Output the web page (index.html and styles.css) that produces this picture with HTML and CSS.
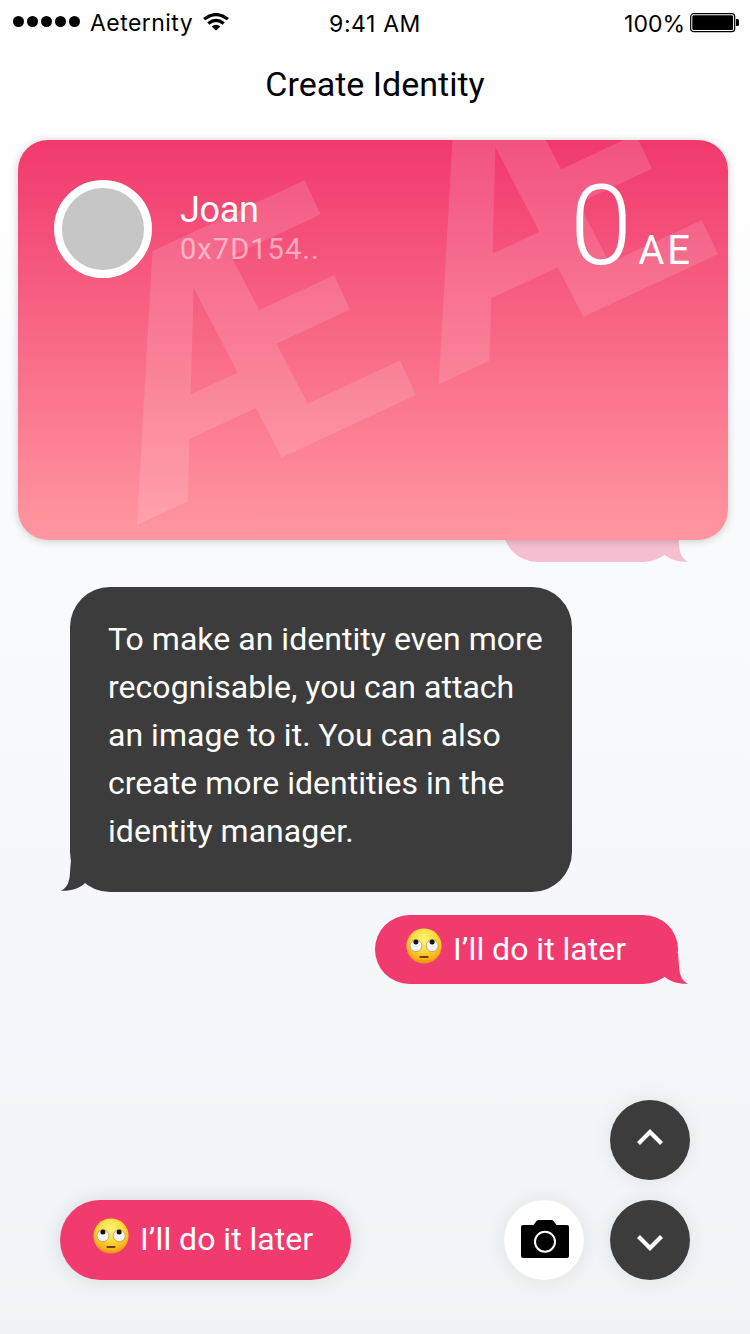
FILE: index.html
```html
<!DOCTYPE html>
<html lang="en">
<head>
<meta charset="utf-8">
<title>Create Identity</title>
<link rel="stylesheet" href="styles.css">
</head>
<body>
<svg class="defs" width="0" height="0" aria-hidden="true">
  <defs>
    <radialGradient id="face" cx=".5" cy=".3" r=".72">
      <stop offset="0" stop-color="#fff47a"/><stop offset=".5" stop-color="#fdd835"/><stop offset=".82" stop-color="#f8ae1c"/><stop offset="1" stop-color="#e28a0c"/>
    </radialGradient>
    <symbol id="eyeroll" viewBox="0 0 36 36">
      <circle cx="18" cy="18" r="17.6" fill="url(#face)"/>
      <circle cx="10" cy="17.7" r="6" fill="#f4f4f2" stroke="#b29a62" stroke-width=".8"/>
      <circle cx="26.2" cy="17.7" r="6" fill="#f4f4f2" stroke="#b29a62" stroke-width=".8"/>
      <circle cx="9.9" cy="14" r="2.5" fill="#17120c"/>
      <circle cx="26.1" cy="14" r="2.5" fill="#17120c"/>
      <path d="M14.3 29h7.4" stroke="#74400b" stroke-width="1.8" stroke-linecap="round"/>
    </symbol>
    <symbol id="tail" viewBox="0 0 30 45">
      <path d="M0 15 L18 13 C18.300 17 18.700 20 19 26 C19.500 35 22 41 28 43.700 C19 44.300 10 41.500 5 37 L0 32Z"/>
    </symbol>
  </defs>
</svg>
<div class="screen">
  <header class="status">
    <div class="carrier">
      <div class="dots"><i></i><i></i><i></i><i></i><i></i></div>
      <span class="carrier-name">Aeternity</span>
      <svg class="wifi" width="26" height="18" viewBox="0 0 26 19" preserveAspectRatio="none">
        <g fill="none" stroke="#000" stroke-width="3.300"><path d="M1.100 6.500 Q13 -3.300 24.900 6.500"/><path d="M5.300 11 Q13 4.700 20.700 11"/></g>
        <path d="M8.700 14.200 Q13 10.600 17.300 14.200 L13 18.500Z"/>
      </svg>
    </div>
    <span class="time">9:41 AM</span>
    <div class="power">
      <span class="percent">100%</span>
      <svg width="49" height="20" viewBox="0 0 49 20">
        <rect x=".7" y=".7" width="44" height="18" rx="3" fill="none" stroke="#000" stroke-width="1.200"/>
        <rect x="2.300" y="2.300" width="40.800" height="14.800" rx="1.500"/>
        <path d="M46 6h1.500q1.500 0 1.500 1.500v4q0 1.500-1.500 1.500H46z"/>
      </svg>
    </div>
  </header>
  <h1 class="title"><span>Create Identity</span></h1>
  <section class="card">
    <svg class="watermark" width="710" height="400" viewBox="0 0 710 400">
      <text transform="translate(118 385.500) rotate(-25)" x="0 333">ÆÆ</text>
    </svg>
    <div class="avatar"></div>
    <div class="owner"><div class="name">Joan</div><div class="address">0x7D154..</div></div>
    <div class="balance"><span class="amount">0</span><span class="unit">AE</span></div>
  </section>
  <main class="chat">
    <div class="bubble reply ghost"><svg class="tail"><use href="#tail"/></svg></div>
    <div class="bubble message"><svg class="tail"><use href="#tail"/></svg>To make an identity even more<br>recognisable, you can attach<br>an image to it. You can also<br>create more identities in the<br>identity manager.</div>
    <div class="bubble reply"><svg class="tail"><use href="#tail"/></svg><svg class="emoji"><use href="#eyeroll"/></svg><span class="label">I’ll do it later</span></div>
  </main>
  <footer class="actions">
    <button class="later"><svg class="emoji"><use href="#eyeroll"/></svg><span class="label">I’ll do it later</span></button>
    <button class="round camera">
      <svg width="48" height="38" viewBox="0 0 48 38"><path d="M2 5h10.500l3-4q.8-1 2-1h13q1.200 0 2 1l3 4H46q2 0 2 2v29q0 2-2 2H2q-2 0-2-2V7q0-2 2-2z"/><circle cx="24" cy="21.700" r="10" fill="none" stroke="#fff" stroke-width="2"/></svg>
    </button>
    <div class="nav">
      <button class="round dark"><svg class="up" width="26" height="16" viewBox="0 0 26 16"><path d="M1.500 14.500 13 3l11.500 11.500"/></svg></button>
      <button class="round dark"><svg class="down" width="26" height="16" viewBox="0 0 26 16"><path d="M1.500 1.500 13 13 24.500 1.500"/></svg></button>
    </div>
  </footer>
</div>
</body>
</html>
```
FILE: styles.css
```css
* { box-sizing: border-box; }
body { margin: 0; font-family: Roboto, sans-serif; }
button { border: 0; padding: 0; font: inherit; color: inherit; }
svg { display: block; flex: none; }
.defs { position: absolute; }
.screen {
  width: 750px; height: 1334px; overflow: hidden;
  display: flex; flex-direction: column;
  background: linear-gradient(#fff 0%, #fff 7%, #f9fafc 43%, #f4f6fa 75%, #eff3f6 100%);
}
.status {
  height: 40px; flex: none; padding: 0 11px 0 13px;
  display: grid; grid-template-columns: 1fr auto 1fr; align-items: center;
  font-family: Inter, sans-serif; font-size: 23px; line-height: 40px; color: #000;
}
.carrier { display: flex; align-items: center; }
.dots { display: flex; gap: 3px; margin-top: -1px; }
.dots i { width: 11px; height: 11px; border-radius: 50%; background: #000; }
.carrier-name { margin: 1px 10px 0 10px; letter-spacing: .45px; }
.wifi { margin-top: -1px; }
.time { padding-top: 4px; letter-spacing: .6px; margin-left: -2px; }
.power { display: flex; align-items: center; justify-content: flex-end; gap: 5px; }
.power svg { margin-top: 1px; }
.percent { padding-top: 4px; }
.title { margin: 0; height: 100px; flex: none; padding-top: 24px; text-align: center; font-size: 34px; line-height: 41px; font-weight: 400; }
.card {
  position: relative; z-index: 1; flex: none;
  width: 710px; height: 400px; margin-left: 18px; padding: 40px 38px 0 36px;
  display: flex; align-items: flex-start; overflow: hidden;
  border-radius: 30px; color: #fff;
  background: linear-gradient(#f13a6d, #ff97a0);
  box-shadow: 0 1px 8px rgba(0, 0, 0, .2);
}
.watermark { position: absolute; left: 0; top: 0; fill: #fff; opacity: .13; font: 700 340px Roboto, sans-serif; }
.avatar { position: relative; width: 98px; height: 98px; border-radius: 50%; border: 8px solid #fff; background: #c6c6c6; }
.owner { position: relative; margin: 9px 0 0 28px; }
.name { font-size: 36px; line-height: 42px; letter-spacing: -.3px; }
.address { font-size: 29px; line-height: 36px; letter-spacing: 1.050px; opacity: .5; }
.balance { position: relative; margin-left: auto; display: flex; align-items: baseline; line-height: 100px; margin-top: -4px; }
.amount { font-size: 112px; font-weight: 300; }
.unit { font-size: 40px; letter-spacing: 3px; margin-left: 6px; margin-right: -3px; }
.chat { display: flex; flex-direction: column; height: 560px; flex: none; padding: 0 72px 0 70px; }
.bubble { position: relative; color: #fff; font-size: 32px; }
.tail { position: absolute; width: 30px; height: 45px; right: -12px; bottom: -1px; }
.reply { display: flex; align-items: center; align-self: flex-end; width: 303px; height: 69px; padding-left: 31px; border-radius: 35px; background: #f13b6f; fill: #f13b6f; }
.ghost { width: 175px; margin-top: -47px; opacity: .3; }
.message { width: 502px; height: 305px; flex: none; margin: 25px 0 23px; padding: 28px 0 0 38px; border-radius: 40px; line-height: 48px; white-space: nowrap; background: #3c3c3c; fill: #3c3c3c; letter-spacing: .03px; }
.message .tail { right: auto; left: -11px; bottom: 0; transform: scaleX(-1); }
.emoji { width: 36px; height: 36px; margin: -7px 11px 0 0; }
.label { margin-top: -2px; }
.actions { display: flex; align-items: flex-end; padding-left: 60px; height: 180px; flex: none; }
.later { display: flex; align-items: center; width: 291px; height: 80px; padding-left: 33px; border-radius: 40px; color: #fff; background: #f13b6f; font-size: 32px; box-shadow: 0 0 20px rgba(0, 0, 0, .1); }
.later .emoji, .reply .emoji { fill: initial; }
.later .emoji { margin-top: -9px; }
.round { width: 80px; height: 80px; border-radius: 50%; display: flex; align-items: center; justify-content: center; box-shadow: 0 0 20px rgba(0, 0, 0, .08); }
.camera { margin-left: 153px; background: #fff; padding-left: 2px; padding-bottom: 2px; }
.nav { margin-left: 26px; display: flex; flex-direction: column; gap: 20px; }
.dark { background: #3c3c3c; }
.dark svg { fill: none; stroke: #fff; stroke-width: 4.200; }
.up { margin-top: -6px; }
.down { margin-top: 5px; }
```
